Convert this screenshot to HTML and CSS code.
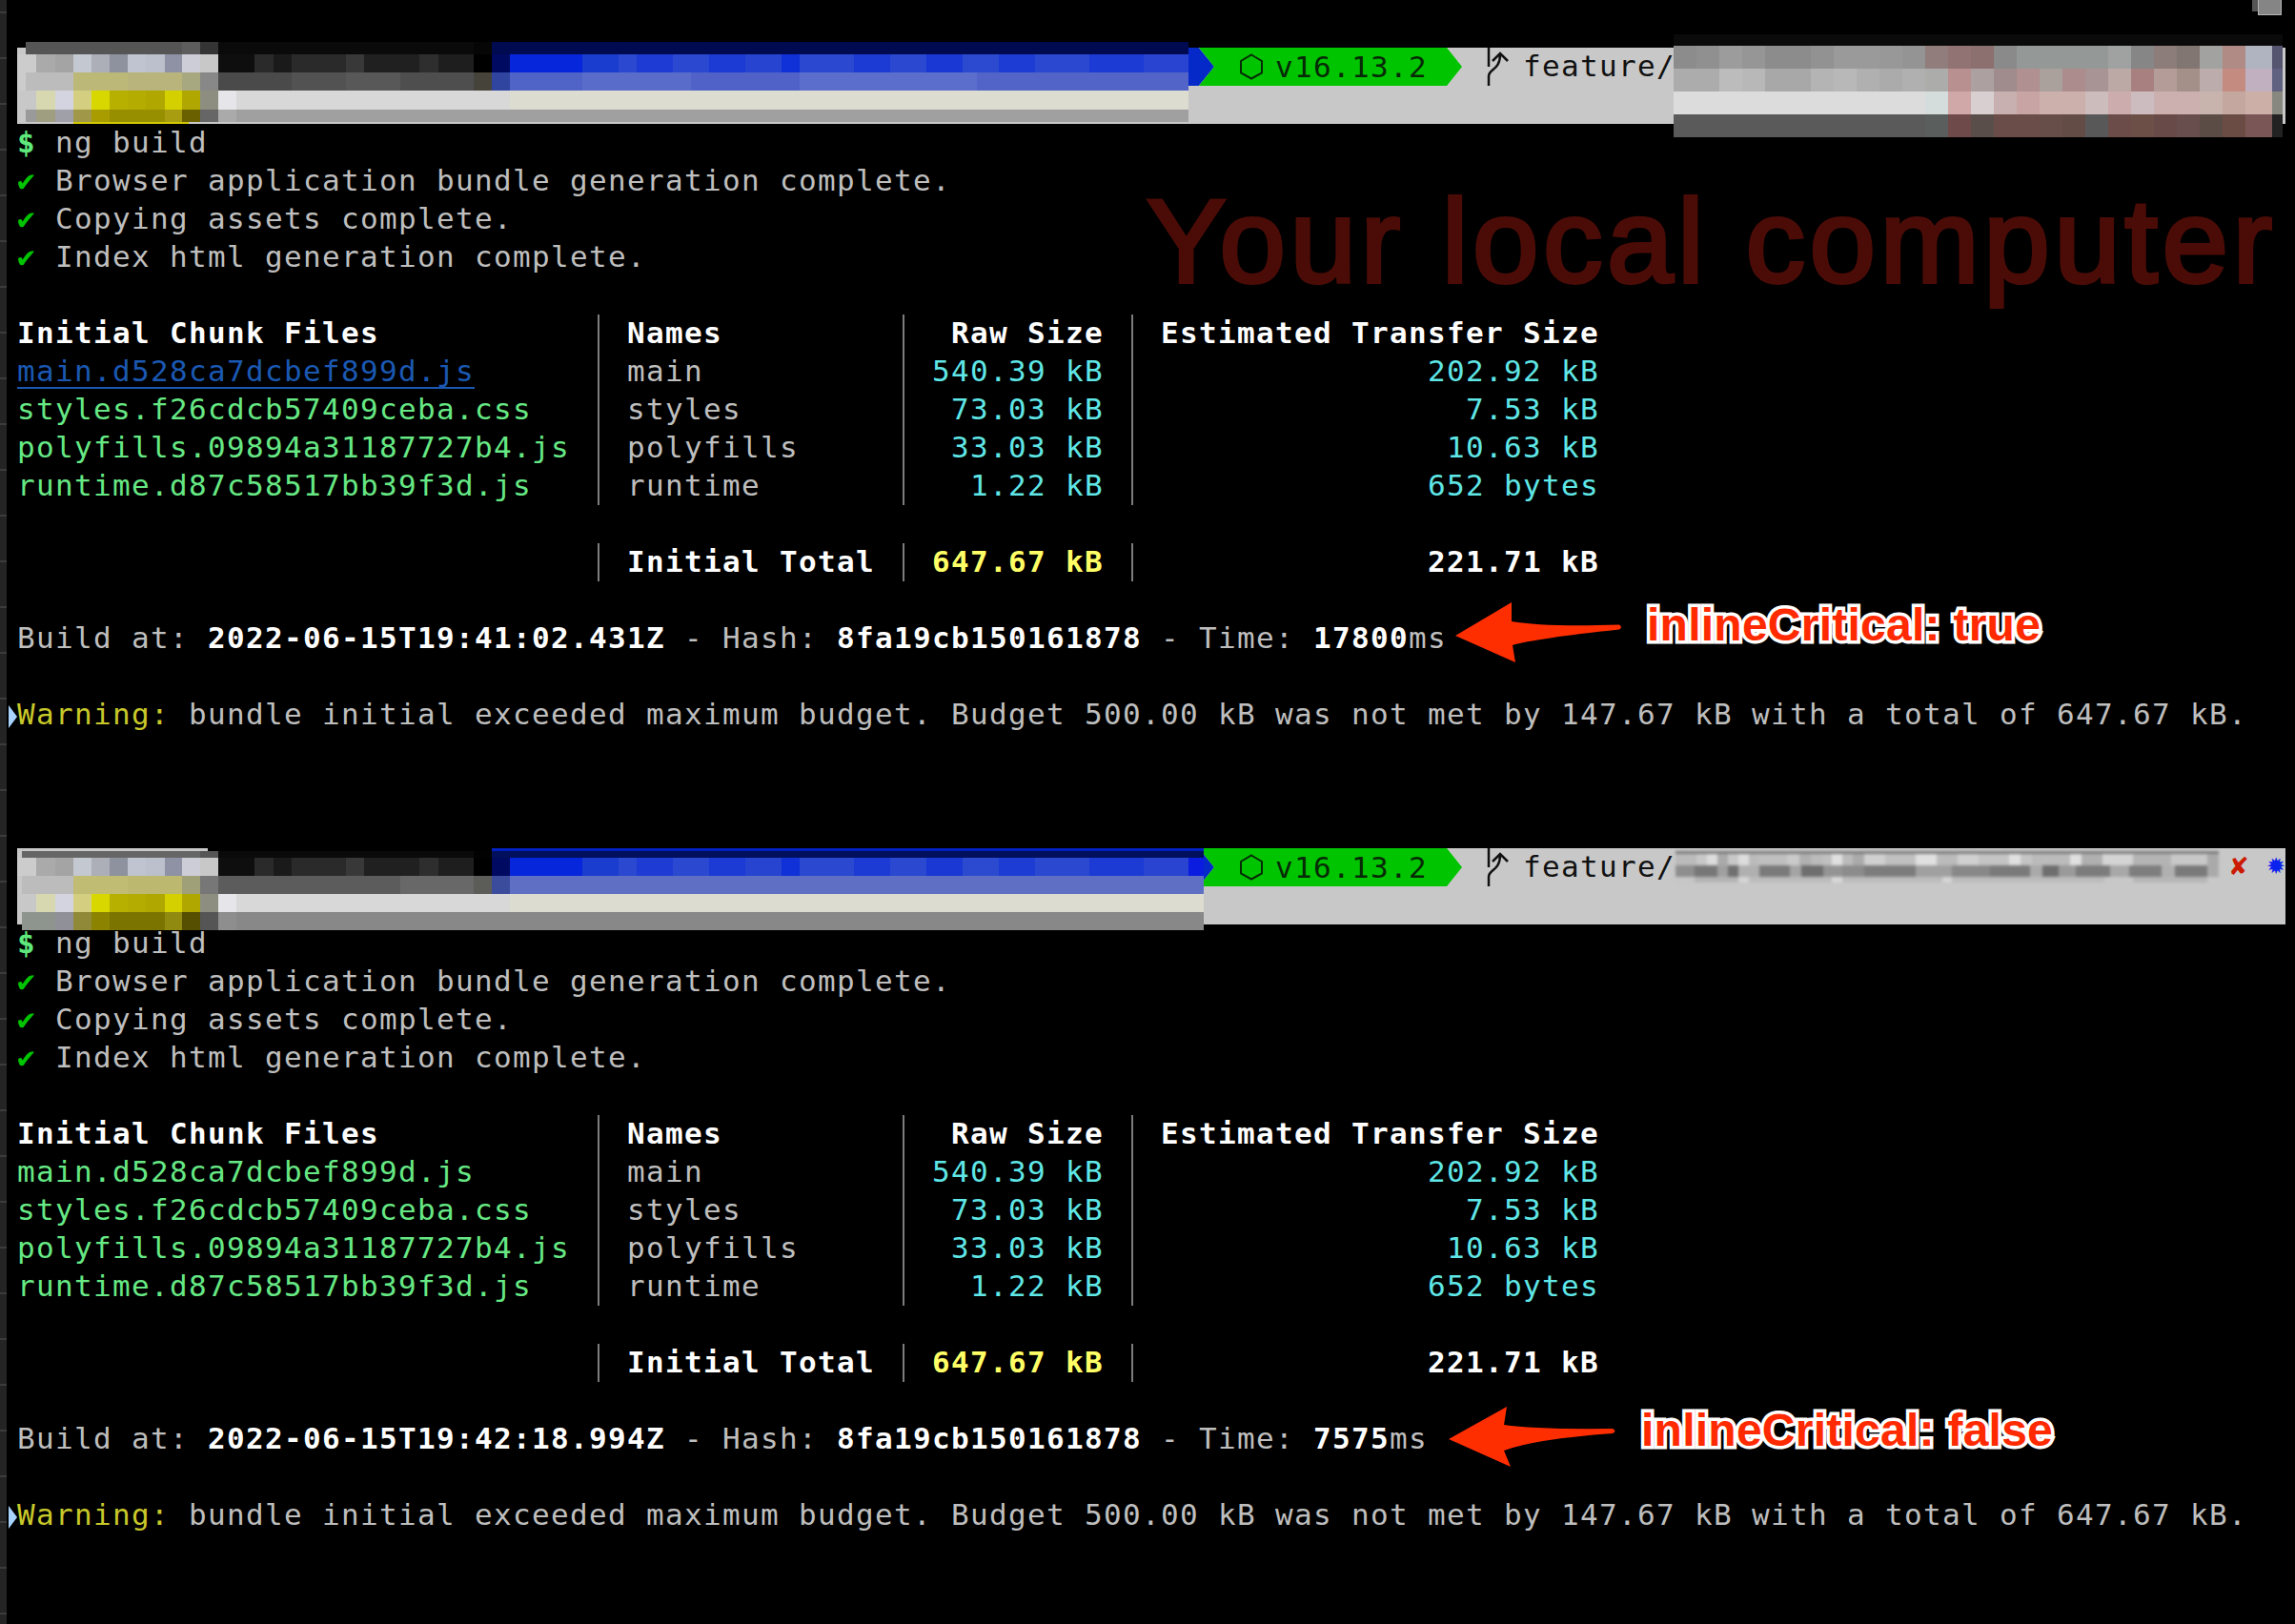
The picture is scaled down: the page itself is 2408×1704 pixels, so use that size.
FILE: index.html
```html
<!DOCTYPE html>
<html lang="en">
<head>
<meta charset="utf-8">
<title>ng build</title>
<link rel="stylesheet" href="styles.css">
</head>
<body>
<div class="rail"></div>
<div class="corner"></div>
<div class="watermark">Your local computer</div>

<main class="terminal">
  <section class="run">
    <div class="prompt">
      <span class="chev"></span>
      <span class="pill">
        <svg class="hex" viewBox="0 0 24 28"><path d="M12 1.500 23 8v12.500L12 26.500 1 20.500V8z"/></svg>
        <span>v16.13.2</span>
      </span>
      <svg class="branch" viewBox="0 0 24 40"><path d="M3 0V20M3 40V30C3 22 15 24 15 7M7 14 15 6 23 14"/></svg>
      <span class="branch-name">feature/</span>
      <div class="mosaic m-left m-left-top">
        <div class="mr h13 a1"></div><div class="mr h19 bb"></div><div class="mr h19 c1"></div><div class="mr h20 dd"></div><div class="mr h13 e1"></div><div class="mr h2 under"></div>
      </div>
      <div class="mosaic m-right">
        <div class="mr h12 r1"></div><div class="mr h24 r2"></div><div class="mr h24 r3"></div><div class="mr h24 r4"></div><div class="mr h24 r5"></div>
      </div>
    </div>
    <div class="line"><b class="dollar">$</b> ng build</div>
    <div class="line"><span class="ok">✔</span> Browser application bundle generation complete.</div>
    <div class="line"><span class="ok">✔</span> Copying assets complete.</div>
    <div class="line"><span class="ok">✔</span> Index html generation complete.</div>
    <div class="line"></div>
    <div class="table">
      <b class="c1st">Initial Chunk Files</b><b class="c2">Names</b><b class="c3">Raw Size</b><b class="c4">Estimated Transfer Size</b>
      <span class="c1st file link">main.d528ca7dcbef899d.js</span><span class="c2">main</span><span class="c3 size">540.39 kB</span><span class="c4 size">202.92 kB</span>
      <span class="c1st file">styles.f26cdcb57409ceba.css</span><span class="c2">styles</span><span class="c3 size">73.03 kB</span><span class="c4 size">7.53 kB</span>
      <span class="c1st file">polyfills.09894a31187727b4.js</span><span class="c2">polyfills</span><span class="c3 size">33.03 kB</span><span class="c4 size">10.63 kB</span>
      <span class="c1st file">runtime.d87c58517bb39f3d.js</span><span class="c2">runtime</span><span class="c3 size">1.22 kB</span><span class="c4 size">652 bytes</span>
      <span class="gap"></span>
      <span class="c1st"></span><b class="c2">Initial Total</b><b class="c3 total">647.67 kB</b><b class="c4">221.71 kB</b>
    </div>
    <div class="line"></div>
    <div class="line">Build at: <b>2022-06-15T19:41:02.431Z</b> - Hash: <b>8fa19cb150161878</b> - Time: <b>17800</b>ms</div>
    <div class="line"></div>
    <div class="line"><span class="mark"></span><span class="warn">Warning:</span> bundle initial exceeded maximum budget. Budget 500.00 kB was not met by 147.67 kB with a total of 647.67 kB.</div>
  </section>

  <section class="run run-second">
    <div class="prompt">
      <span class="chev"></span>
      <span class="pill">
        <svg class="hex" viewBox="0 0 24 28"><path d="M12 1.500 23 8v12.500L12 26.500 1 20.500V8z"/></svg>
        <span>v16.13.2</span>
      </span>
      <svg class="branch" viewBox="0 0 24 40"><path d="M3 0V20M3 40V30C3 22 15 24 15 7M7 14 15 6 23 14"/></svg>
      <span class="branch-name">feature/</span>
      <span class="status"><span class="st-x">✘</span><span class="st-star">✹</span></span>
      <div class="mosaic m-left m-left-bottom">
        <div class="mr h3 top2"></div><div class="mr h7 a2"></div><div class="mr h19 bb"></div><div class="mr h19 c2row"></div><div class="mr h19 dd"></div><div class="mr h19 e2"></div>
      </div>
      <div class="mosaic m-branch">
        <div class="mr h3 s1"></div><div class="mr h12 s2"></div><div class="mr h12 s3"></div><div class="mr h6 s4"></div>
      </div>
    </div>
    <div class="line"><b class="dollar">$</b> ng build</div>
    <div class="line"><span class="ok">✔</span> Browser application bundle generation complete.</div>
    <div class="line"><span class="ok">✔</span> Copying assets complete.</div>
    <div class="line"><span class="ok">✔</span> Index html generation complete.</div>
    <div class="line"></div>
    <div class="table">
      <b class="c1st">Initial Chunk Files</b><b class="c2">Names</b><b class="c3">Raw Size</b><b class="c4">Estimated Transfer Size</b>
      <span class="c1st file">main.d528ca7dcbef899d.js</span><span class="c2">main</span><span class="c3 size">540.39 kB</span><span class="c4 size">202.92 kB</span>
      <span class="c1st file">styles.f26cdcb57409ceba.css</span><span class="c2">styles</span><span class="c3 size">73.03 kB</span><span class="c4 size">7.53 kB</span>
      <span class="c1st file">polyfills.09894a31187727b4.js</span><span class="c2">polyfills</span><span class="c3 size">33.03 kB</span><span class="c4 size">10.63 kB</span>
      <span class="c1st file">runtime.d87c58517bb39f3d.js</span><span class="c2">runtime</span><span class="c3 size">1.22 kB</span><span class="c4 size">652 bytes</span>
      <span class="gap"></span>
      <span class="c1st"></span><b class="c2">Initial Total</b><b class="c3 total">647.67 kB</b><b class="c4">221.71 kB</b>
    </div>
    <div class="line"></div>
    <div class="line">Build at: <b>2022-06-15T19:42:18.994Z</b> - Hash: <b>8fa19cb150161878</b> - Time: <b>7575</b>ms</div>
    <div class="line"></div>
    <div class="line"><span class="mark"></span><span class="warn">Warning:</span> bundle initial exceeded maximum budget. Budget 500.00 kB was not met by 147.67 kB with a total of 647.67 kB.</div>
  </section>
</main>

<svg class="pointer pointer-one" viewBox="1520 625 190 80"><path d="M1527 667 1586 632 1586 652Q1620 658 1699 655.500Q1703 658 1699 660.500Q1610 670 1587 677L1590 695Z"/></svg>
<div class="note note-one">inlineCritical: true</div>
<svg class="pointer pointer-two" viewBox="1515 1470 190 75"><path d="M1520 1510 1581 1476 1578 1495Q1610 1500 1692 1499Q1697 1501.500 1692 1504Q1610 1510 1578 1522L1585 1539Z"/></svg>
<div class="note note-two">inlineCritical: false</div>
</body>
</html>
```
FILE: styles.css
```css
html, body { margin: 0; padding: 0; background: #000; }
body {
  position: relative;
  height: 1704px;
  overflow: hidden;
  color: #bebebe;
  font-family: "DejaVu Sans Mono", "Liberation Mono", monospace;
  font-size: 31px;
  letter-spacing: 1.336px;
  line-height: 39px;
}
b { color: #fff; font-weight: 700; }

.rail {
  position: absolute; left: 0; top: 0; width: 7px; height: 100%;
  background: repeating-linear-gradient(180deg, #242424 0 12px, #3c3c3c 12px 14px, #242424 14px 48px);
}
.corner {
  position: absolute; left: 2369px; top: 0; width: 23px; height: 15px;
  background: #858585; border: solid #b5b5b5; border-width: 0 1px 1px 1px;
  box-shadow: -6px -4px 0 #555;
}
.watermark {
  position: absolute; left: 1203px; top: 181px;
  font: 400 125px/144px "Liberation Sans", Arial, sans-serif;
  letter-spacing: 4.500px;
  color: #4b0c07;
  -webkit-text-stroke: 4px #4b0c07;
  white-space: nowrap;
}

.terminal { padding-top: 50px; }
.run-second { margin-top: 120px; }

.line { height: 40px; padding-left: 18px; white-space: pre; }
.dollar { color: #5fe87c; }
.ok { color: #00c400; }
.warn { color: #c8c82a; }
.mark {
  display: inline-block; width: 9px; height: 24px; margin-left: -9px; vertical-align: -4px;
  background: #a8d4ff; clip-path: polygon(0 0, 100% 50%, 0 100%);
}

/* prompt bar */
.prompt {
  position: relative;
  display: flex;
  align-items: flex-start;
  width: 2380px;
  height: 80px;
  margin-left: 18px;
  background: #c8c8c8;
  color: #111;
}
.chev {
  width: 27px; height: 40px; margin-left: 1229px;
  background: #0529c9;
  clip-path: polygon(0 0, 40% 0, 100% 50%, 40% 100%, 0 100%);
}
.pill {
  display: flex; align-items: center;
  width: 233px; height: 40px; margin-left: -16px; padding-left: 43px;
  background: #00c400;
  color: #062a06;
  clip-path: polygon(0 0, calc(100% - 16px) 0, 100% 50%, calc(100% - 16px) 100%, 0 100%, 16px 50%);
}
.hex { width: 24px; height: 28px; margin-right: 13px; fill: none; stroke: #062a06; stroke-width: 2; }
.branch { width: 24px; height: 40px; margin-left: 25px; fill: none; stroke: #111; stroke-width: 2.500; }
.branch-name { margin-left: 15px; }
.status { display: flex; margin-left: auto; gap: 20px; font-family: "DejaVu Sans", sans-serif; }
.status span { width: 20px; text-align: center; letter-spacing: 0; }
.st-x { color: #cc1a00; font-size: 26px; }
.st-star { color: #0a22ee; font-size: 24px; }

/* pixelated censor blocks that lie over the prompt */
.mosaic { position: absolute; filter: blur(0.7px); }
.mr { width: 100%; }
.h2 { height: 2px; } .h3 { height: 3px; } .h6 { height: 6px; } .h7 { height: 7px; }
.h12 { height: 12px; } .h13 { height: 13px; } .h19 { height: 19px; } .h20 { height: 20px; } .h24 { height: 24px; }

.m-left { left: 0; }
.m-left-top { top: -6px; width: 1229px; }
.m-left-bottom { top: 0; width: 1245px; }
.m-right { left: 1738px; top: -14px; width: 639px; }
.m-branch { left: 1740px; top: 3px; width: 570px; filter: blur(1.5px); }

.a1 { background: linear-gradient(90deg, transparent 0 9px, #555 0 173px, #5d5d5d 0 192px, #343434 0 211px, #0a0a0a 0 479px, #060606 0 498px, #000a50 0 100%); }
.a2 { background: linear-gradient(90deg, transparent 0 5px, #666 0 192px, #555 0 211px, #0a0a0a 0 479px, #020202 0 498px, #00105c 0 100%); }
.top2 { background: linear-gradient(90deg, transparent 0 200px, #000 0 498px, #0020c0 0 100%); }
.bb { background: linear-gradient(90deg, #ccc 0 20px, #aaa 0 40px, #a4a4a4 0 59px, #c4c8d0 0 78px, #acaeb8 0 97px, #8e929e 0 116px, #c0c4d0 0 135px, #bcc0cc 0 155px, #8e92a4 0 173px, #cccdd6 0 192px, #c8c8c8 0 211px, #0e0e0e 0 249px, #2a2a2a 0 269px, #1a1a1a 0 288px, #2a2a2a 0 345px, #383838 0 364px, #202020 0 422px, #2e2e2e 0 442px, #1e1e1e 0 479px, #000 0 498px, #000a60 0 517px, #0626dc 0 593px, #1a3ccf 0 631px, #2a48d0 0 650px, #1e3cd4 0 688px, #2a48d0 0 726px, #1c3ad4 0 764px, #2644d0 0 802px, #1030d8 0 821px, #2a48d0 0 878px, #1c3ad4 0 916px, #2a48d0 0 954px, #1a38d4 0 992px, #2c4ad0 0 1030px, #1c3cd4 0 1068px, #2a48d0 0 1125px, #1c3ad4 0 1182px, #2844d0 0 1229px, #0a1ce0 0 100%); }
.c1 { background: linear-gradient(90deg, #ccc 0 9px, #bcbcbc 0 59px, #bcb878 0 116px, #b8b47c 0 173px, #a8a880 0 192px, #888 0 211px, #4a4a4a 0 288px, #525252 0 345px, #585858 0 402px, #4e4e4e 0 479px, #45433a 0 498px, #3045a0 0 517px, #5064c8 0 593px, #5a6cca 0 707px, #5062c8 0 821px, #5c6ecc 0 1007px, #5264c8 0 100%); }
.c2row { background: linear-gradient(90deg, transparent 0 5px, #bcbcbc 0 59px, #c0bc74 0 116px, #bcb870 0 173px, #a0a078 0 192px, #777 0 211px, #5c5c5c 0 402px, #686868 0 479px, #5c5c58 0 498px, #3c4c9c 0 517px, #5f70c4 0 100%); }
.dd { background: linear-gradient(90deg, #c8c8c8 0 20px, #d8d8b0 0 40px, #d4d4e0 0 59px, #d4cf80 0 78px, #d8d800 0 97px, #b8b000 0 116px, #b4ac00 0 135px, #b0a800 0 155px, #d4d000 0 173px, #b0a800 0 192px, #8e8e80 0 211px, #e6e6ea 0 230px, #d8d8d8 0 517px, #dcdcd0 0 100%); }
.e1 { background: linear-gradient(90deg, transparent 0 9px, #9a9a9a 0 20px, #a09e80 0 40px, #a0a0a8 0 59px, #a09848 0 78px, #a89c00 0 97px, #988f00 0 155px, #a89c10 0 173px, #6a6000 0 192px, #666 0 211px, #aaa 0 230px, #a0a0a0 0 100%); }
.e2 { background: linear-gradient(90deg, transparent 0 5px, #8e948e 0 40px, #909098 0 59px, #908a38 0 78px, #8c8400 0 97px, #7c7400 0 155px, #908a10 0 173px, #564e00 0 192px, #555 0 211px, #8e8e8e 0 230px, #888 0 100%); }
.under { background: linear-gradient(90deg, transparent 0 59px, #d0c800 0 180px, transparent 0 100%); }

.r1 { background: #0a0a0a; }
.r2 { background: linear-gradient(90deg, #8c8c8c 0 24px, #909090 0 48px, #9c9c9c 0 72px, #969696 0 96px, #8c8c8c 0 144px, #929292 0 168px, #9a9a9a 0 216px, #989898 0 240px, #949494 0 264px, #927d7d 0 288px, #917373 0 312px, #8c6f6f 0 336px, #8a8a8a 0 360px, #949896 0 456px, #a0a2a2 0 480px, #868686 0 504px, #8c7c7a 0 528px, #827672 0 552px, #a2a2a0 0 576px, #b08a84 0 600px, #b0b4c0 0 628px, #555570 0 100%); }
.r3 { background: linear-gradient(90deg, #acacac 0 48px, #bcbcbc 0 72px, #b8b8b8 0 96px, #a8a8a8 0 144px, #b4b4b4 0 168px, #b8b8b8 0 192px, #b0b0b0 0 216px, #ababab 0 240px, #b0b0b0 0 264px, #acacaa 0 288px, #b89090 0 312px, #aca0a0 0 336px, #a08c8c 0 360px, #b09090 0 384px, #aaa09c 0 408px, #ac8c8c 0 432px, #a89494 0 456px, #bca8a4 0 480px, #a88080 0 504px, #b49c98 0 528px, #a49088 0 552px, #bcacac 0 576px, #c48c80 0 600px, #c0b0c0 0 628px, #606080 0 100%); }
.r4 { background: linear-gradient(90deg, #dcdcdc 0 264px, #d4dcdc 0 288px, #d0a8a8 0 312px, #d8d0d0 0 336px, #c8b0b0 0 360px, #c8a4a4 0 384px, #ccb0ac 0 432px, #ccbcbc 0 456px, #ccacac 0 480px, #ccbcc0 0 504px, #ccb0b0 0 552px, #c8b4ac 0 576px, #c4a8a0 0 600px, #ccb0a8 0 628px, #888880 0 100%); }
.r5 { background: linear-gradient(90deg, #5a5a5a 0 264px, #5a5e5c 0 288px, #6e4a4a 0 312px, #5a4e4a 0 336px, #6a4c48 0 384px, #684e48 0 408px, #644c46 0 432px, #585858 0 456px, #6c4c48 0 480px, #6c5048 0 504px, #684a48 0 528px, #684e4c 0 552px, #5c4c46 0 576px, #6a4c44 0 600px, #7a5656 0 628px, #222 0 100%); }

.s1 { background: #7e7e7e; }
.s2 { background: linear-gradient(90deg, #bbb 0 22px, #c8c8c8 0 33px, #dcdcdc 0 44px, #aaa 0 55px, #c8c8c8 0 66px, #dcdcdc 0 77px, #bbb 0 88px, #bfbfbf 0 117px, #cacaca 0 130px, #b0b0b0 0 142px, #bbb 0 155px, #c0c0c0 0 164px, #e0e0e0 0 175px, #bbb 0 186px, #aaa 0 198px, #d0d0d0 0 220px, #c0c0c0 0 252px, #e0e0e0 0 274px, #bbb 0 296px, #d0d0d0 0 318px, #c4c4c4 0 350px, #e0e0e0 0 362px, #c4c4c4 0 374px, #bbb 0 414px, #e0e0e0 0 426px, #b0b0b0 0 448px, #d4d4d4 0 480px, #b4b4b4 0 520px, #c8c8c8 0 558px, #aaa 0 100%); }
.s3 { background: linear-gradient(90deg, #8e8e8e 0 20px, #777 0 44px, #a0a0a0 0 55px, #707070 0 66px, #b0b0b0 0 88px, #7a7a7a 0 120px, #a4a4a4 0 132px, #6e6e6e 0 155px, #949494 0 175px, #8c8c8c 0 198px, #7c7c7c 0 252px, #a0a0a0 0 290px, #888 0 330px, #7a7a7a 0 372px, #aaa 0 385px, #6e6e6e 0 402px, #9a9a9a 0 420px, #7c7c7c 0 456px, #a8a8a8 0 476px, #7e7e7e 0 510px, #b0b0b0 0 524px, #7a7a7a 0 558px, #aaa 0 100%); }
.s4 { background: linear-gradient(90deg, #c6c6c6 0 20px, #b4b4b4 0 66px, #d4d4d4 0 77px, #bcbcbc 0 164px, #d8d8d8 0 175px, #bcbcbc 0 280px, #d4d4d4 0 290px, #bcbcbc 0 450px, #c8c8c8 0 480px, #b6b6b6 0 558px, transparent 0 100%); }

/* build table */
.table { display: grid; grid-template-columns: 609px 320px 240px 491px; grid-auto-rows: 40px; padding-left: 18px; }
.table > * { white-space: pre; }
.c2, .c3, .c4 { border-left: 2px solid #7c7c7c; }
.c2 { padding-left: 29px; }
.c3 { padding-right: 29px; text-align: right; }
.c4 { text-align: right; }
.gap { grid-column: 1 / -1; }
.file { color: #66e884; }
.size { color: #5fe6e6; }
.total { color: #ffff66; }
.link { color: #1b58b2; text-decoration: underline; text-underline-offset: 6px; text-decoration-thickness: 2px; }

/* annotations */
.pointer { position: absolute; fill: #ff2e00; }
.pointer-one { left: 1520px; top: 625px; width: 190px; height: 80px; }
.pointer-two { left: 1515px; top: 1470px; width: 190px; height: 75px; }
.note {
  position: absolute;
  font: 700 48px/56px "Liberation Sans", Arial, sans-serif;
  letter-spacing: 0.25px;
  color: #ff2a00;
  -webkit-text-stroke: 7px #fff;
  paint-order: stroke fill;
  white-space: nowrap;
}
.note-one { left: 1728px; top: 628px; }
.note-two { left: 1722px; top: 1473px; }
```
